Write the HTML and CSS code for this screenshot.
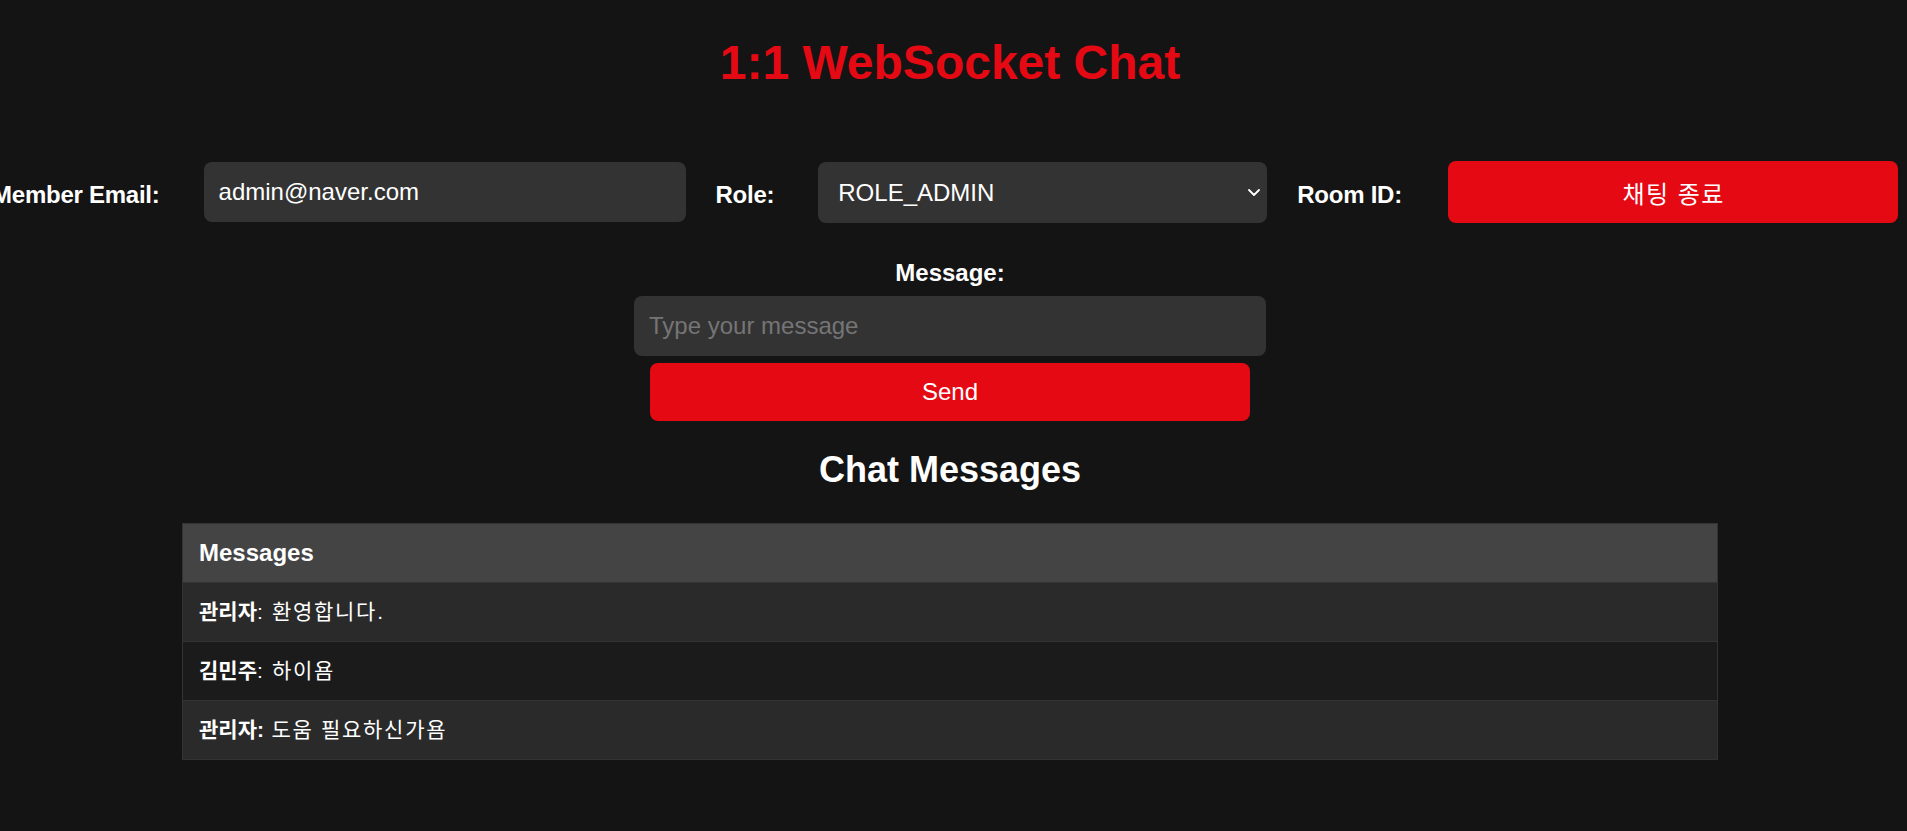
FILE: index.html
```html
<!DOCTYPE html>
<html lang="ko">
<head>
<meta charset="utf-8">
<title>1:1 WebSocket Chat</title>
<link rel="stylesheet" href="styles.css">
</head>
<body>
<div class="page">
  <h1 class="title">1:1 WebSocket Chat</h1>

  <div class="form-row">
    <label class="field-label" for="email">Member Email:</label>
    <input id="email" class="text-input email-input" type="text" value="admin@naver.com">
    <label class="field-label" for="role">Role:</label>
    <div class="select-wrap">
      <select id="role" class="role-select">
        <option>ROLE_ADMIN</option>
        <option>ROLE_USER</option>
      </select>
      <svg class="select-arrow" width="12" height="7" viewBox="0 0 12 7"><path d="M1 1 L6 6 L11 1" fill="none" stroke="#ffffff" stroke-width="1.8" stroke-linecap="round" stroke-linejoin="round"/></svg>
    </div>
    <label class="field-label label-room">Room ID:</label>
    <button class="btn btn-end" type="button">채팅 종료</button>
  </div>

  <div class="message-box">
    <label class="field-label message-label" for="msg">Message:</label>
    <input id="msg" class="text-input message-input" type="text" placeholder="Type your message">
    <button class="btn btn-send" type="button">Send</button>
  </div>

  <h2 class="section-title">Chat Messages</h2>

  <table class="chat-table">
    <thead>
      <tr><th>Messages</th></tr>
    </thead>
    <tbody>
      <tr class="row-odd"><td><strong>관리자</strong>: 환영합니다.</td></tr>
      <tr class="row-even"><td><strong>김민주</strong>: 하이욤</td></tr>
      <tr class="row-odd"><td><strong>관리자:</strong> 도움 필요하신가욤</td></tr>
    </tbody>
  </table>
</div>
</body>
</html>
```

FILE: styles.css
```css
html, body {
  margin: 0;
  padding: 0;
  background: #141414;
}

body {
  font-family: "Liberation Sans", Arial, "Noto Sans CJK KR", sans-serif;
  color: #ffffff;
  overflow: hidden;
}

.page {
  box-sizing: border-box;
  width: 100%;
  padding-right: 7px;
}

.title {
  margin: 35px 0 0;
  font-size: 48px;
  line-height: 56px;
  font-weight: bold;
  color: #e50914;
  text-align: center;
}

.form-row {
  box-sizing: border-box;
  width: 100%;
  padding-right: 10px;
  margin-top: 70px;
  height: 62px;
  display: flex;
  justify-content: center;
  align-items: center;
  gap: 30px;
}

.form-row > * {
  flex: none;
}

.field-label {
  font-size: 24px;
  line-height: 28px;
  font-weight: bold;
  color: #ffffff;
}

.form-row .field-label {
  padding-top: 6px;
  margin-right: 14px;
  letter-spacing: -0.25px;
}

.form-row .label-room {
  margin-right: 16px;
}

.text-input {
  box-sizing: border-box;
  border: none;
  outline: none;
  border-radius: 8px;
  background: #333333;
  color: #ffffff;
  font-family: "Liberation Sans", Arial, "Noto Sans CJK KR", sans-serif;
  font-size: 24px;
  padding: 0 15px;
  margin: 0;
}

.text-input::placeholder {
  color: #757575;
}

.email-input {
  width: 482px;
  height: 60px;
}

.select-wrap {
  position: relative;
  width: 449px;
  height: 61px;
}

.role-select {
  -webkit-appearance: none;
  appearance: none;
  box-sizing: border-box;
  width: 100%;
  height: 100%;
  border: none;
  outline: none;
  border-radius: 8px;
  background: #333333;
  color: #ffffff;
  font-family: "Liberation Sans", Arial, sans-serif;
  font-size: 24px;
  padding: 0 30px 0 20px;
  margin: 0;
}

.select-arrow {
  position: absolute;
  right: 7px;
  top: 27px;
  pointer-events: none;
}

.btn {
  border: none;
  border-radius: 8px;
  background: #e50914;
  color: #ffffff;
  font-family: "Liberation Sans", Arial, "Noto Sans CJK KR", sans-serif;
  font-size: 24px;
  margin: 0;
  padding: 0;
  cursor: pointer;
}

.btn-end {
  width: 450px;
  height: 62px;
  letter-spacing: 1.5px;
  text-indent: 1.5px;
}

.message-box {
  margin-top: 36px;
  display: flex;
  flex-direction: column;
  align-items: center;
}

.message-label {
  display: block;
}

.message-input {
  flex: none;
  width: 632px;
  height: 60px;
  margin-top: 9px;
}

.btn-send {
  width: 600px;
  height: 58px;
  margin-top: 7px;
}

.section-title {
  margin: 28px 0 0;
  font-size: 36px;
  line-height: 42px;
  font-weight: bold;
  text-align: center;
  color: #ffffff;
}

.chat-table {
  width: 1536px;
  margin: 32px auto 0;
  border-collapse: collapse;
}

.chat-table th,
.chat-table td {
  border: 1px solid #333333;
  padding: 0 16px;
  text-align: left;
  line-height: 58px;
  color: #ffffff;
}

.chat-table th {
  background: #444444;
  font-size: 24px;
  font-weight: bold;
}

.chat-table td {
  font-size: 21px;
  letter-spacing: 1.7px;
}

.chat-table td strong {
  letter-spacing: 0;
}

.row-odd td {
  background: #2a2a2a;
}

.row-even td {
  background: #1b1b1b;
}
```
